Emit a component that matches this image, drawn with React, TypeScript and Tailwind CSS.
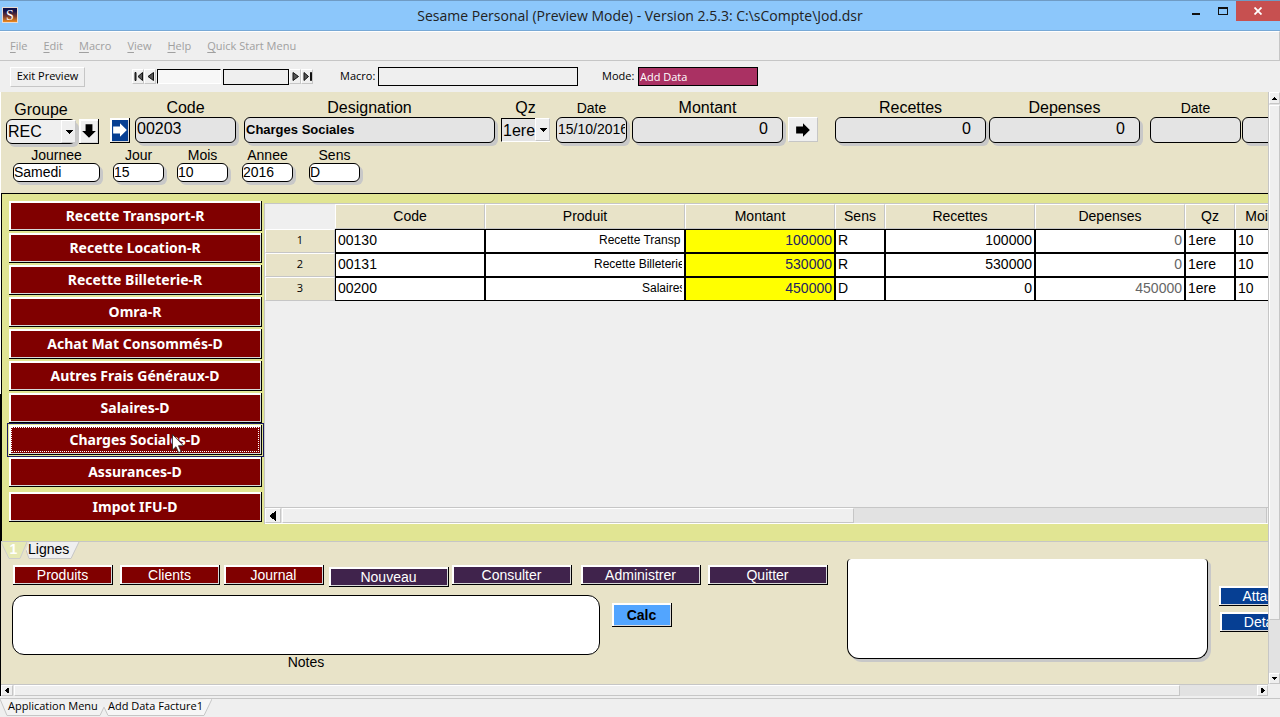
import { useId, type ReactNode } from 'react';
import clsx from 'clsx';

const arial = "font-['Liberation_Sans',Arial,sans-serif]";
const segoe = "font-['Open_Sans','Segoe_UI',sans-serif]";

// white top/left edge, grey inner edge and a black outer edge
const bevel = 'border-r border-b border-black shadow-[inset_2px_2px_0_#fff,inset_-1px_-1px_0_#d8d8d8]';
const softBevel = 'border border-t-white border-l-white border-r-[#c6c6c6] border-b-[#c6c6c6] bg-[#efefef]';

const groups = [
  'Recette Transport-R',
  'Recette Location-R',
  'Recette Billeterie-R',
  'Omra-R',
  'Achat Mat Consommés-D',
  'Autres Frais Généraux-D',
  'Salaires-D',
  'Charges Sociales-D',
  'Assurances-D',
  'Impot IFU-D',
];

const columns = [
  { title: 'Code', width: 'w-[150px]' },
  { title: 'Produit', width: 'w-[200px]' },
  { title: 'Montant', width: 'w-[150px]' },
  { title: 'Sens', width: 'w-[50px]' },
  { title: 'Recettes', width: 'w-[150px]' },
  { title: 'Depenses', width: 'w-[150px]' },
  { title: 'Qz', width: 'w-[50px]' },
  { title: 'Mois', width: 'w-[50px]' },
];

const rows = [
  { code: '00130', product: 'Recette Transp', clip: 'w-[83px]', amount: '100000', sens: 'R', inc: '100000', exp: '0' },
  { code: '00131', product: 'Recette Billeterie', clip: 'w-[88px]', amount: '530000', sens: 'R', inc: '530000', exp: '0' },
  { code: '00200', product: 'Salaires', clip: 'w-[40px]', amount: '450000', sens: 'D', inc: '0', exp: '450000' },
];

const menus = ['File', 'Edit', 'Macro', 'View', 'Help', 'Quick Start Menu'];

function Triangle({ dir, size = 7 }: { dir: 'left' | 'right' | 'up' | 'down'; size?: number }) {
  const d = {
    left: 'M6 0v8L1 4z',
    right: 'M2 0v8l5-4z',
    up: 'M0 6h8L4 2z',
    down: 'M0 2h8L4 6z',
  }[dir];
  return (
    <svg width={size} height={size} viewBox="0 0 8 8" className="shrink-0" shapeRendering="crispEdges" aria-hidden="true">
      <path d={d} fill="#000" />
    </svg>
  );
}

function BlockArrow({ className, fill = '#000' }: { className?: string; fill?: string }) {
  return (
    <svg width="16" height="16" viewBox="0 0 14 14" className={clsx('shrink-0', className)} aria-hidden="true">
      <path d="M1 4h6V1l6 6-6 6v-3H1z" fill={fill} />
    </svg>
  );
}

// record navigation: a triangle, with a bar against it for first / last
function RecordArrow({ label, path }: { label: string; path: string }) {
  return (
    <button aria-label={label} className={clsx('flex h-[15px] w-3 items-center justify-center', softBevel)}>
      <svg width="9" height="9" viewBox="0 0 9 9" className="shrink-0" aria-hidden="true">
        <path d={path} fill="#555" stroke="#111" strokeWidth="1" />
      </svg>
    </button>
  );
}

interface FieldProps {
  label?: string;
  name?: string;
  value?: string;
  className: string;
  inputClass?: string;
  small?: boolean;
}

function Field({ label, name, value = '', className, inputClass, small }: FieldProps) {
  const id = useId();
  return (
    <div className={clsx('flex shrink-0 flex-col', className)}>
      {label && (
        <label htmlFor={id} className={clsx('text-center', small ? 'text-sm leading-4' : 'text-base leading-[18px]')}>
          {label}
        </label>
      )}
      <input
        id={id}
        aria-label={label ? undefined : name}
        defaultValue={value}
        className={clsx('h-[26px] w-full rounded-md border border-black pb-[2px] outline-none', inputClass)}
      />
    </div>
  );
}

function DropDown({ label, value, className, selectClass }: { label: string; value: string; className: string; selectClass: string }) {
  const id = useId();
  return (
    <div className={clsx('flex shrink-0 flex-col', className)}>
      <label htmlFor={id} className="text-center text-base leading-[18px]">{label}</label>
      <div className="relative">
        <select id={id} defaultValue={value} className={clsx('block w-full appearance-none outline-none', selectClass)}>
          <option>{value}</option>
        </select>
        <span className={clsx('pointer-events-none absolute top-[1px] right-0 bottom-[1px] flex w-[15px] items-center justify-center', softBevel)}>
          <Triangle dir="down" size={8} />
        </span>
      </div>
    </div>
  );
}

function BevelButton({ className, children }: { className?: string; children: ReactNode }) {
  return <button className={clsx('flex shrink-0 items-center justify-center', bevel, className)}>{children}</button>;
}

function ScrollButton({ dir, className, size }: { dir: 'left' | 'right' | 'up' | 'down'; className: string; size?: number }) {
  return (
    <button aria-label={`Scroll ${dir}`} className={clsx('flex shrink-0 items-center justify-center', softBevel, className)}>
      <Triangle dir={dir} size={size} />
    </button>
  );
}

function TitleBar() {
  return (
    <header className={clsx('grid h-[31px] shrink-0 grid-cols-[1fr_auto_1fr] border-t border-b border-t-[#6f9bc4] border-b-[#78a9d6] bg-[#8cc7fb]', segoe)}>
      <svg width="16" height="16" viewBox="0 0 16 16" className="mt-[6px] ml-[2px]" aria-hidden="true">
        <defs>
          <linearGradient id="logo" x1="0" y1="0" x2="0" y2="1">
            <stop offset="0.2" stopColor="#11114a" />
            <stop offset="0.6" stopColor="#7a3a2c" />
            <stop offset="1" stopColor="#f08c1c" />
          </linearGradient>
        </defs>
        <rect width="16" height="16" fill="#e9d9cf" />
        <rect x="1" y="1" width="14" height="14" fill="url(#logo)" />
        <text x="8" y="13" textAnchor="middle" fontSize="14" fill="#fff" fontFamily="Liberation Serif">S</text>
      </svg>
      <h1 className="text-sm leading-[29px] text-[#222]">Sesame Personal (Preview Mode) - Version 2.5.3: C:\sCompte\Jod.dsr</h1>
      <div className="flex items-start justify-end">
        <button aria-label="Minimize" className="flex h-5 w-[27px] items-center justify-center">
          <svg width="10" height="10" viewBox="0 0 10 10"><path d="M1 7h8v2H1z" fill="#111" /></svg>
        </button>
        <button aria-label="Maximize" className="flex h-5 w-[27px] items-center justify-center">
          <svg width="10" height="8" viewBox="0 0 10 8" shapeRendering="crispEdges">
            <path d="M0 0h10v8H0zM1 2v5h8V2z" fill="#111" fillRule="evenodd" />
          </svg>
        </button>
        <button aria-label="Close" className="flex h-5 w-11 items-center justify-center bg-[#c75050]">
          <svg width="8" height="8" viewBox="0 0 8 8"><path d="M.5.5l7 7M7.500.5l-7 7" stroke="#fff" strokeWidth="1.8" /></svg>
        </button>
      </div>
    </header>
  );
}

function Toolbar() {
  return (
    <div className={clsx('flex h-[31px] shrink-0 items-center text-[11px]', segoe)}>
      <button className={clsx('ml-[10px] h-5 w-[75px] shrink-0', softBevel)}>Exit Preview</button>
      <div className="ml-[47px] flex items-center">
        <RecordArrow label="First record" path="M1 .5h1v8h-1zM8.500.5v8L4 4.500z" />
        <RecordArrow label="Previous record" path="M7.500.5v8L2 4.500z" />
        <input aria-label="Record" className="ml-[1px] h-[15px] w-16 border border-t-black border-r-white border-b-white border-l-black bg-[#f7f7f7]" />
        <input aria-label="Record count" className="ml-[2px] h-4 w-[66px] border border-black" />
        <RecordArrow label="Next record" path="M2 .5v8L7.500 4.500z" />
        <RecordArrow label="Last record" path="M7.500.5h1v8h-1zM1 .5v8L5.500 4.500z" />
      </div>
      <label htmlFor="macro" className="ml-[27px] w-[38px]">Macro:</label>
      <input id="macro" className="h-[19px] w-[200px] border border-black" />
      <label htmlFor="mode" className="ml-6 w-9">Mode:</label>
      <input id="mode" defaultValue="Add Data" className="h-[19px] w-[120px] border border-black bg-[#aa3163] px-px text-white" />
    </div>
  );
}

const box = 'bg-[#e4e4e4] shadow-[3px_3px_0_#c8c8c8]';
const whiteBox = 'h-[19px]! bg-white px-0 text-sm shadow-[3px_3px_0_#c8c8c8]';

function EntryForm() {
  return (
    <section className="shrink-0 overflow-hidden pt-[7px] pb-[11px]">
      <div className="flex h-[44px] items-start">
        <DropDown label="Groupe" value="REC" className="ml-[5px] w-[70px] pt-[2px]" selectClass="h-[25px] rounded-md border border-black bg-[#efefef] px-px text-base shadow-[3px_3px_0_#c8c8c8]" />
        <BevelButton className="mt-5 ml-[3px] h-[25px] w-5 bg-[#efefef]"><BlockArrow className="rotate-90" /></BevelButton>
        <BevelButton className="mt-[19px] ml-[11px] h-[25px] w-5 bg-[#063f93]"><BlockArrow fill="#fff" /></BevelButton>
        <Field label="Code" value="00203" className="ml-[5px] w-[101px]" inputClass={clsx(box, 'px-px text-base')} />
        <Field label="Designation" value="Charges Sociales" className="ml-2 w-[251px]" inputClass={clsx(box, 'px-px text-[13px] font-bold')} />
        <DropDown label="Qz" value="1ere" className="ml-[6px] w-[49px]" selectClass="mt-px h-6 border border-t-black border-r-white border-b-white border-l-black bg-[#e4e4e4] px-px text-base" />
        <Field label="Date" value="15/10/2016" className="ml-[6px] w-[71px] [&_label]:text-sm/[18px]" inputClass={clsx(box, 'px-px text-sm')} />
        <Field label="Montant" value="0" className="ml-[5px] w-[151px]" inputClass={clsx(box, 'pr-[14px] text-right text-base')} />
        <button aria-label="Add amount" className={clsx('mt-[18px] ml-[5px] flex h-[25px] w-[30px] shrink-0 items-center justify-center', softBevel)}>
          <BlockArrow />
        </button>
        <Field label="Recettes" value="0" className="ml-[17px] w-[151px]" inputClass={clsx(box, 'pr-[14px] text-right text-base')} />
        <Field label="Depenses" value="0" className="ml-[3px] w-[151px]" inputClass={clsx(box, 'pr-[14px] text-right text-base')} />
        <Field label="Date" className="ml-[10px] w-[91px] [&_label]:text-sm/[18px]" inputClass="bg-[#e4e4e4]" />
        <Field name="Detail" className="mt-[18px] ml-px w-[91px]" inputClass={box} />
      </div>
      <div className="mt-1 flex">
        <Field small label="Journee" value="Samedi" className="ml-3 w-[87px]" inputClass={whiteBox} />
        <Field small label="Jour" value="15" className="ml-[13px] w-[51px]" inputClass={whiteBox} />
        <Field small label="Mois" value="10" className="ml-[13px] w-[51px]" inputClass={whiteBox} />
        <Field small label="Annee" value="2016" className="ml-[14px] w-[51px]" inputClass={whiteBox} />
        <Field small label="Sens" value="D" className="ml-4 w-[51px]" inputClass={whiteBox} />
      </div>
    </section>
  );
}

function GroupList() {
  return (
    <nav className="flex w-[262px] shrink-0 flex-col gap-[2px] py-[7px] pl-[7px] font-['Noto_Sans',Tahoma,sans-serif] text-sm font-bold text-white">
      {groups.map((g) => {
        const focused = g === 'Charges Sociales-D';
        return (
          <BevelButton
            key={g}
            className={clsx(
              'h-[30px] w-[253px] bg-[#800000] last:mt-[3px]',
              focused && 'relative p-[2px] outline-1 outline-offset-1 outline-[#1a1a60]',
            )}
          >
            {focused ? (
              <>
                <span className="flex h-full w-full items-center justify-center border border-dotted border-white">{g}</span>
                <svg width="12" height="20" viewBox="0 0 12 20" className="absolute top-[9px] left-[163px]" aria-hidden="true">
                  <path d="M.5.5v15.500l3.500-3.300 2.600 6 2.500-1.100-2.600-5.900h5z" fill="#fff" stroke="#222" strokeWidth=".8" />
                </svg>
              </>
            ) : (
              g
            )}
          </BevelButton>
        );
      })}
    </nav>
  );
}

function LinesTable() {
  const head = 'border border-t-white border-l-white border-r-[#c6c6c6] border-b-[#c6c6c6] bg-[#e8e3c8] px-0 pt-0 pb-[2px] font-normal';
  const cell = 'overflow-hidden border border-black px-[2px] pt-0 pb-[2px] whitespace-nowrap';
  return (
    <div className="mt-[9px] mb-[17px] flex min-w-0 flex-1 flex-col overflow-hidden border-t border-l border-[#c6c6c6] bg-[#efefef]">
      <div className="flex-1 overflow-hidden">
        <table className="w-[1020px] table-fixed border-separate border-spacing-0 text-sm leading-5">
          <thead>
            <tr className="h-[25px]">
              <th className="w-[70px]" />
              {columns.map((c) => (
                <th key={c.title} className={clsx(head, c.width)}>{c.title}</th>
              ))}
            </tr>
          </thead>
          <tbody>
            {rows.map((r, i) => (
              <tr key={r.code} className="h-6 bg-white">
                <th scope="row" className={clsx(head, 'text-[11px]', segoe)}>{i + 1}</th>
                <td className={cell}>{r.code}</td>
                <td className={clsx(cell, 'text-xs/5')}>
                  <span className={clsx('ml-auto block overflow-hidden', r.clip)}>{r.product}</span>
                </td>
                <td className={clsx(cell, 'bg-[#ffff00] text-right text-[#222260]')}>{r.amount}</td>
                <td className={cell}>{r.sens}</td>
                <td className={clsx(cell, 'text-right')}>{r.inc}</td>
                <td className={clsx(cell, 'text-right text-[#666]')}>{r.exp}</td>
                <td className={cell}>1ere</td>
                <td className={cell}>10</td>
              </tr>
            ))}
          </tbody>
        </table>
      </div>
      <div className="flex h-[17px] shrink-0 border-t border-b border-t-[#c6c6c6] border-b-white bg-[#e2e2e2]">
        <ScrollButton dir="left" className="w-4" size={10} />
        <div className={clsx('ml-px w-[57%]', softBevel)} />
        <div className="ml-auto w-[2px] border-l border-[#c6c6c6] bg-[#efefef]" />
      </div>
    </div>
  );
}

function BottomPanel() {
  const action = 'h-5 text-sm leading-4 text-white';
  return (
    <section className="shrink-0 overflow-hidden border-t border-[#c6c6c6]">
      <div role="tablist" className="flex h-[17px] text-sm leading-[14px]">
        <button role="tab" className="relative flex w-[25px] justify-center">
          <svg width="26" height="17" viewBox="0 0 26 17" className="absolute inset-0" aria-hidden="true">
            <path d="M0 0l8 16.500h11L26 0z" fill="#e6e9b4" />
            <path d="M0 0l8 16.500h11L26 0" fill="none" stroke="#ccc" />
          </svg>
          <span className="relative font-bold text-white">1</span>
        </button>
        <button role="tab" className="relative flex w-[54px] pl-[2px]">
          <svg width="54" height="17" viewBox="0 0 54 17" className="absolute inset-0" aria-hidden="true">
            <path d="M0 8l3 8.500h42L53 0H3z" fill="#efefef" />
            <path d="M0 8l3 8.500h42L53 0" fill="none" stroke="#c6c6c6" />
          </svg>
          <span className="relative">Lignes</span>
        </button>
      </div>
      <div className="flex h-[125px]">
        <div className="w-[827px] shrink-0 pt-[6px]">
          <div className="flex pl-3">
            <BevelButton className={clsx(action, 'w-[100px] bg-[#800000]')}>Produits</BevelButton>
            <BevelButton className={clsx(action, 'ml-[7px] w-[100px] bg-[#800000]')}>Clients</BevelButton>
            <BevelButton className={clsx(action, 'ml-1 w-[100px] bg-[#800000]')}>Journal</BevelButton>
            <BevelButton className={clsx(action, 'mt-[2px] ml-[5px] w-[120px] bg-[#40234c]')}>Nouveau</BevelButton>
            <BevelButton className={clsx(action, 'ml-[3px] w-[120px] bg-[#40234c]')}>Consulter</BevelButton>
            <BevelButton className={clsx(action, 'ml-[9px] w-[120px] bg-[#40234c]')}>Administrer</BevelButton>
            <BevelButton className={clsx(action, 'ml-[7px] w-[120px] bg-[#40234c]')}>Quitter</BevelButton>
          </div>
          <div className="mt-2 flex pl-[11px]">
            <div className="flex w-[588px] flex-col">
              <textarea id="notes" className="h-[60px] resize-none rounded-xl border border-black bg-white outline-none" />
              <label htmlFor="notes" className="text-center text-sm leading-[14px]">Notes</label>
            </div>
            <BevelButton className="mt-2 ml-3 h-6 w-[60px] bg-[#52a5ff] text-sm font-bold">Calc</BevelButton>
          </div>
        </div>
        <textarea
          aria-label="Details"
          className="ml-[19px] h-[100px] w-[361px] shrink-0 resize-none rounded-t-[4px] rounded-b-xl border border-t-0 border-black bg-white shadow-[3px_3px_0_#c8c8c8] outline-none"
        />
        <div className="ml-[11px] flex flex-col gap-[6px] pt-[27px]">
          <BevelButton className={clsx(action, 'w-[100px] bg-[#063f93]')}>Attacher</BevelButton>
          <BevelButton className={clsx(action, 'ml-px w-[100px] bg-[#063f93]')}>Detailler</BevelButton>
        </div>
      </div>
    </section>
  );
}

function WindowTabs() {
  return (
    <footer className={clsx('flex h-[19px] shrink-0 border-t border-[#c6c6c6] text-[11px] leading-[14px]', segoe)}>
      <button className="relative flex w-[104px] shrink-0 pl-2">
        <svg width="104" height="18" viewBox="0 0 104 18" className="absolute inset-0" aria-hidden="true">
          <path d="M0 0l7 16.500h93l4-8.500" fill="#f3f3f3" stroke="#c6c6c6" />
        </svg>
        <span className="relative">Application Menu</span>
      </button>
      <button className="relative flex w-[108px] shrink-0 pl-1">
        <svg width="108" height="18" viewBox="0 0 108 18" className="absolute inset-0" aria-hidden="true">
          <path d="M0 8l4 8.500h96L108 0" fill="#f6f6f6" stroke="#c6c6c6" />
        </svg>
        <span className="relative">Add Data Facture1</span>
      </button>
    </footer>
  );
}

export default function App() {
  return (
    <div className={clsx('flex h-screen flex-col overflow-hidden bg-[#efefef] text-black', arial)}>
      <TitleBar />
      <nav className={clsx('flex h-[30px] shrink-0 items-center gap-4 border-t border-r border-b border-t-white border-r-[#c6c6c6] border-b-[#c6c6c6] pl-[10px] text-[11px] text-[#a0a0a0]', segoe)}>
        {menus.map((m) => (
          <button key={m}>
            <span className="underline underline-offset-2">{m[0]}</span>
            {m.slice(1)}
          </button>
        ))}
      </nav>
      <Toolbar />
      <div className="flex min-h-0 flex-1">
        <div className="flex w-px shrink-0 flex-col">
          <div className="flex-1 bg-white" />
          <div className="flex-1 bg-black" />
        </div>
        <main className="flex min-w-0 flex-1 flex-col bg-[#e8e3c8]">
          <EntryForm />
          <div className="flex min-h-0 flex-1 border-t border-l border-black bg-[#e1e593]">
            <GroupList />
            <LinesTable />
          </div>
          <BottomPanel />
          <div className="flex h-3 shrink-0 border-t border-[#c6c6c6] bg-[#e2e2e2]">
            <ScrollButton dir="left" className="w-3" />
            <div className={clsx('ml-px w-[92%]', softBevel)} />
            <ScrollButton dir="right" className="ml-auto w-[11px]" />
          </div>
        </main>
        <div className="mb-3 flex w-3 shrink-0 flex-col border-l border-[#c6c6c6] bg-[#e2e2e2]">
          <ScrollButton dir="up" className="h-3" />
          <div className={clsx('mt-px h-[87%]', softBevel)} />
          <ScrollButton dir="down" className="mt-auto h-[11px]" />
        </div>
      </div>
      <div className="h-[2px] shrink-0" />
      <WindowTabs />
    </div>
  );
}
